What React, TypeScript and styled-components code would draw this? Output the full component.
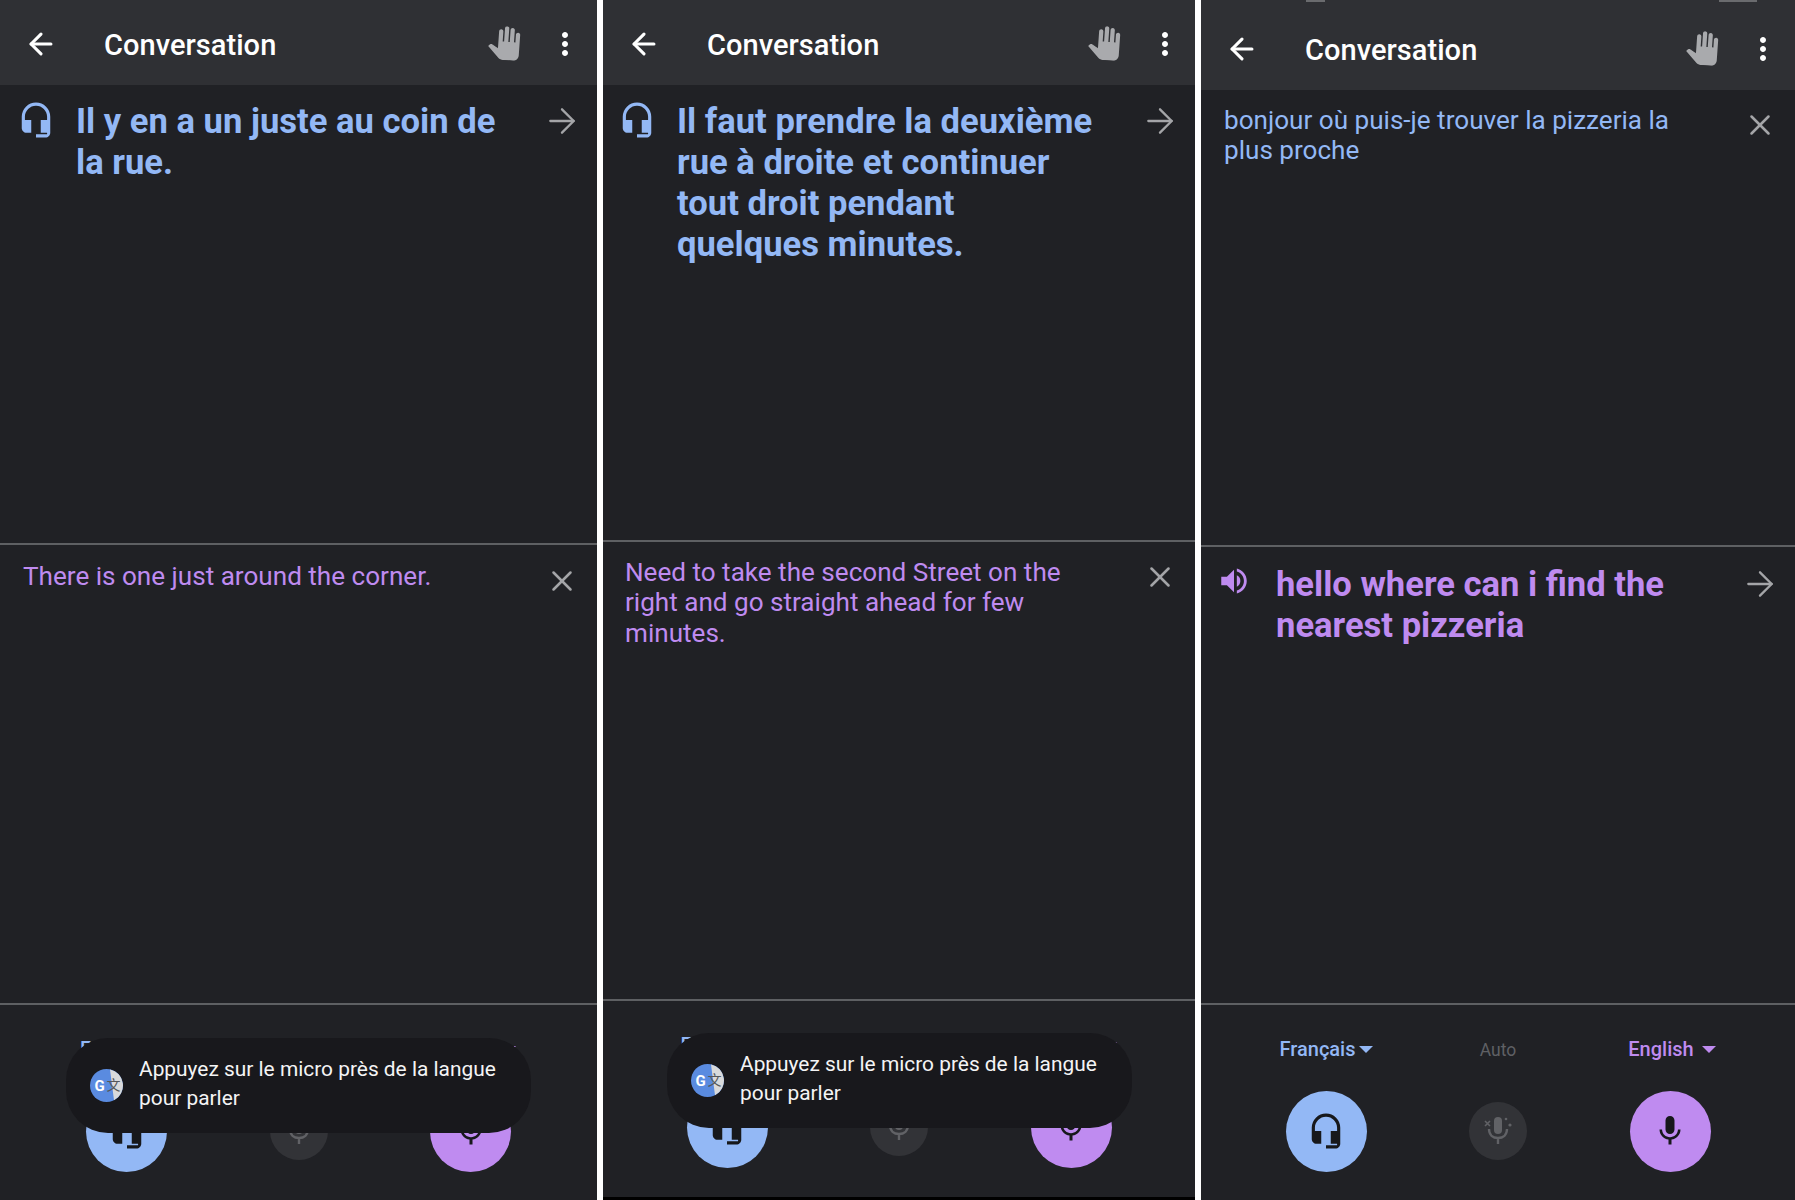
import React from 'react';
import styled, { createGlobalStyle } from 'styled-components';
import { ArrowLeft, ArrowRight, X } from 'lucide-react';
import { MdHeadsetMic, MdMic, MdMoreVert, MdPanTool, MdVolumeUp } from 'react-icons/md';

const BLUE = '#93b8f5';
const PURPLE = '#bf8bf0';

const GlobalStyle = createGlobalStyle`
  html, body {
    margin: 0;
    padding: 0;
    background: #ffffff;
    font-family: Roboto, "Noto Sans", sans-serif;
  }
`;

const Page = styled.div`
  display: flex;
  gap: 6px;
  width: 1795px;
  height: 1200px;
  overflow: hidden;
  background: #ffffff;
`;

const Screen = styled.section<{ $width: number }>`
  position: relative;
  display: flex;
  flex-direction: column;
  width: ${(p) => p.$width}px;
  height: 1200px;
  background: #000000;
  overflow: hidden;
`;

const Header = styled.header<{ $height: number; $right: number }>`
  display: flex;
  align-items: center;
  flex: none;
  box-sizing: border-box;
  height: ${(p) => p.$height}px;
  padding: ${(p) => p.$height - 85}px ${(p) => p.$right}px 0 24px;
  background: #2f3034;
  color: #ffffff;
`;

const BackSlot = styled.div`
  display: flex;
  width: 80px;
  margin-top: 2px;
`;

const Title = styled.h1`
  flex: 1;
  margin: 4px 0 0;
  font-size: 29px;
  font-weight: 500;
  line-height: 34px;
  letter-spacing: 0.05px;
`;

const HandSlot = styled.div`
  display: flex;
  justify-content: center;
  width: 36px;
  margin-right: 25px;
  color: #a9aaad;
  transform: rotate(4deg);
`;

const MenuSlot = styled.div`
  display: flex;
  justify-content: center;
  width: 36px;
  margin-top: 2px;
`;

const Pane = styled.div<{ $height: number; $top: number; $left: number }>`
  display: flex;
  flex: none;
  box-sizing: border-box;
  height: ${(p) => p.$height}px;
  padding: ${(p) => p.$top}px 0 0 ${(p) => p.$left}px;
  background: #202125;
  border-bottom: 2px solid #5e6063;
`;

const LeadIcon = styled.div<{ $color: string }>`
  flex: none;
  width: 56px;
  margin-left: -3px;
  margin-right: 3px;
  color: ${(p) => p.$color};
`;

const BigText = styled.p<{ $color: string }>`
  flex: 1;
  margin: 0;
  color: ${(p) => p.$color};
  font-size: 34.6px;
  font-weight: 700;
  line-height: 41px;
`;

const SmallText = styled.p<{ $color: string }>`
  flex: 1;
  margin: 0;
  color: ${(p) => p.$color};
  font-size: 26.1px;
  font-weight: 400;
  line-height: 30.4px;
`;

const SideSlot = styled.div`
  display: flex;
  align-items: center;
  justify-content: center;
  flex: none;
  width: 70px;
  height: 40px;
  color: #a4a5a8;
`;

const Footer = styled.footer<{ $height: number }>`
  display: grid;
  grid-template-columns: repeat(3, 172px);
  justify-content: center;
  flex: none;
  box-sizing: border-box;
  height: ${(p) => p.$height}px;
  padding-top: 31px;
  background: #202125;
`;

const Column = styled.div`
  display: flex;
  flex-direction: column;
  align-items: center;
`;

const LangLabel = styled.div<{ $color: string; $gap: number; $shift: number }>`
  display: flex;
  align-items: center;
  gap: ${(p) => p.$gap}px;
  height: 26px;
  margin-left: ${(p) => p.$shift}px;
  color: ${(p) => p.$color};
  font-size: 20px;
  font-weight: 500;
`;

const AutoLabel = styled.div`
  display: flex;
  align-items: center;
  height: 28px;
  color: #5f6064;
  font-size: 17.5px;
`;

const Caret = styled.span<{ $color: string }>`
  width: 0;
  height: 0;
  border-left: 7px solid transparent;
  border-right: 7px solid transparent;
  border-top: 7px solid ${(p) => p.$color};
`;

const MicSlot = styled.div<{ $gap: number }>`
  display: flex;
  align-items: center;
  justify-content: center;
  height: 90px;
  margin-top: ${(p) => p.$gap}px;
`;

const RoundButton = styled.div<{ $color: string }>`
  display: flex;
  align-items: center;
  justify-content: center;
  width: 81px;
  height: 81px;
  border-radius: 50%;
  background: ${(p) => p.$color};
  color: #17181b;
`;

const MutedButton = styled.div`
  display: flex;
  align-items: center;
  justify-content: center;
  width: 58px;
  height: 58px;
  border-radius: 50%;
  background: #323337;
  color: #616266;
`;

const Toast = styled.div<{ $left: number; $top: number }>`
  position: absolute;
  left: ${(p) => p.$left}px;
  top: ${(p) => p.$top}px;
  display: flex;
  align-items: center;
  gap: 16px;
  box-sizing: border-box;
  width: 465px;
  height: 95px;
  padding-left: 24px;
  border-radius: 42px;
  background: #18181c;
  color: #f4f4f5;
  font-size: 20.9px;
  line-height: 29px;
`;

const ToastText = styled.div`
  padding-bottom: 3px;
`;

const StatusScrap = styled.div<{ $left: number; $width: number }>`
  position: absolute;
  top: 0;
  left: ${(p) => p.$left}px;
  width: ${(p) => p.$width}px;
  height: 2px;
  background: #6a6b6e;
`;

const TranslateLogo = () => (
  <svg width="33" height="33" viewBox="0 0 33 33">
    <circle cx="16.5" cy="16.5" r="16.5" fill="#5a8be0" />
    <path d="M20 0.4 A16.5 16.5 0 0 1 24 31.2 Z" fill="#d9dadb" />
    <text x="9.5" y="21.5" fontFamily="Roboto, sans-serif" fontSize="15" fontWeight="700" fill="#ffffff" textAnchor="middle">
      G
    </text>
    <text x="23.5" y="21" fontFamily='"Noto Sans CJK SC", sans-serif' fontSize="14" fill="#55575a" textAnchor="middle">
      文
    </text>
  </svg>
);

const MutedMic = () => (
  <svg width="36" height="36" viewBox="0 0 36 36" fill="none">
    <rect x="14" y="4" width="8" height="17" rx="4" fill="currentColor" />
    <path d="M9 16c0 6 4 9 9 9s9-3 9-9M18 25v6" stroke="currentColor" strokeWidth="2.4" />
    <path d="M5 8l5 5M10 8l-5 5" stroke="currentColor" strokeWidth="1.6" />
    <circle cx="26" cy="6" r="1.3" fill="currentColor" />
    <circle cx="30" cy="12" r="1.6" fill="currentColor" />
  </svg>
);

type ControlsProps = { height: number };

const Controls: React.FC<ControlsProps> = ({ height }) => (
  <Footer $height={height}>
    <Column>
      <LangLabel $color={BLUE} $gap={3} $shift={0}>
        Français
        <Caret $color={BLUE} />
      </LangLabel>
      <MicSlot $gap={24}>
        <RoundButton $color={BLUE}>
          <MdHeadsetMic size={38} />
        </RoundButton>
      </MicSlot>
    </Column>
    <Column>
      <AutoLabel>Auto</AutoLabel>
      <MicSlot $gap={22}>
        <MutedButton>
          <MutedMic />
        </MutedButton>
      </MicSlot>
    </Column>
    <Column>
      <LangLabel $color={PURPLE} $gap={8} $shift={4}>
        English
        <Caret $color={PURPLE} />
      </LangLabel>
      <MicSlot $gap={24}>
        <RoundButton $color={PURPLE}>
          <MdMic size={36} />
        </RoundButton>
      </MicSlot>
    </Column>
  </Footer>
);

const TopBar: React.FC<{ height: number; right?: number }> = ({ height, right = 14 }) => (
  <Header $height={height} $right={right}>
    <BackSlot>
      <ArrowLeft size={34} strokeWidth={2.2} />
    </BackSlot>
    <Title>Conversation</Title>
    <HandSlot>
      <MdPanTool size={34} />
    </HandSlot>
    <MenuSlot>
      <MdMoreVert size={36} />
    </MenuSlot>
  </Header>
);

const Arrow = () => (
  <SideSlot>
    <ArrowRight size={40} strokeWidth={1.4} />
  </SideSlot>
);

const Close = () => (
  <SideSlot>
    <X size={34} strokeWidth={1.8} />
  </SideSlot>
);

const Hint = ({ left, top }: { left: number; top: number }) => (
  <Toast $left={left} $top={top}>
    <TranslateLogo />
    <ToastText>
      Appuyez sur le micro près de la langue
      <br />
      pour parler
    </ToastText>
  </Toast>
);

export default function App() {
  return (
    <>
      <GlobalStyle />
      <Page>
        <Screen $width={597}>
          <TopBar height={85} />
          <Pane $height={460} $top={16} $left={20}>
            <LeadIcon $color={BLUE}>
              <MdHeadsetMic size={38} />
            </LeadIcon>
            <BigText $color={BLUE}>
              Il y en a un juste au coin de
              <br />
              la rue.
            </BigText>
            <Arrow />
          </Pane>
          <Pane $height={460} $top={16} $left={23}>
            <SmallText $color={PURPLE}>There is one just around the corner.</SmallText>
            <Close />
          </Pane>
          <Controls height={195} />
          <Hint left={66} top={1038} />
        </Screen>

        <Screen $width={592}>
          <TopBar height={85} right={12} />
          <Pane $height={457} $top={16} $left={18}>
            <LeadIcon $color={BLUE}>
              <MdHeadsetMic size={38} />
            </LeadIcon>
            <BigText $color={BLUE}>
              Il faut prendre la deuxième
              <br />
              rue à droite et continuer
              <br />
              tout droit pendant
              <br />
              quelques minutes.
            </BigText>
            <Arrow />
          </Pane>
          <Pane $height={459} $top={15} $left={22}>
            <SmallText $color={PURPLE}>
              Need to take the second Street on the
              <br />
              right and go straight ahead for few
              <br />
              minutes.
            </SmallText>
            <Close />
          </Pane>
          <Controls height={196} />
          <Hint left={64} top={1033} />
        </Screen>

        <Screen $width={594}>
          <TopBar height={90} />
          <Pane $height={457} $top={15} $left={23}>
            <SmallText $color={BLUE}>
              bonjour où puis-je trouver la pizzeria la
              <br />
              plus proche
            </SmallText>
            <Close />
          </Pane>
          <Pane $height={458} $top={17} $left={19}>
            <LeadIcon $color={PURPLE}>
              <MdVolumeUp size={34} />
            </LeadIcon>
            <BigText $color={PURPLE}>
              hello where can i find the
              <br />
              nearest pizzeria
            </BigText>
            <Arrow />
          </Pane>
          <Controls height={195} />
          <StatusScrap $left={105} $width={19} />
          <StatusScrap $left={518} $width={38} />
        </Screen>
      </Page>
    </>
  );
}
